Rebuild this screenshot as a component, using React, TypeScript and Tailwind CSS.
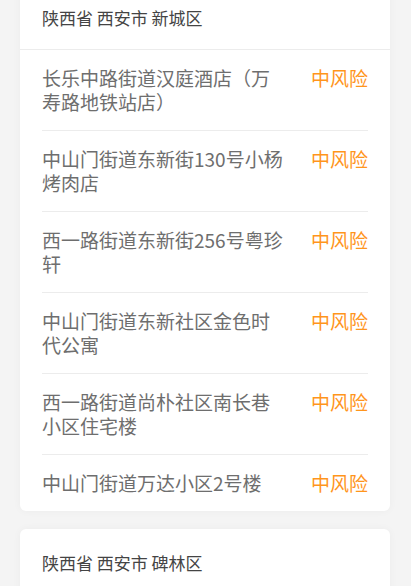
type Place = {
  name: string;
  level: string;
};

type Area = {
  title: string;
  places: Place[];
};

const areas: Area[] = [
  {
    title: "陕西省 西安市 新城区",
    places: [
      { name: "长乐中路街道汉庭酒店（万寿路地铁站店）", level: "中风险" },
      { name: "中山门街道东新街130号小杨烤肉店", level: "中风险" },
      { name: "西一路街道东新街256号粤珍轩", level: "中风险" },
      { name: "中山门街道东新社区金色时代公寓", level: "中风险" },
      { name: "西一路街道尚朴社区南长巷小区住宅楼", level: "中风险" },
      { name: "中山门街道万达小区2号楼", level: "中风险" },
    ],
  },
  {
    title: "陕西省 西安市 碑林区",
    places: [
      { name: "张家村街道西北工业大学家属区", level: "中风险" },
      { name: "太乙路街道交大一村", level: "中风险" },
    ],
  },
];

function AreaCard({ title, places }: Area) {
  return (
    <div className="bg-white rounded-md shadow-[0_0_8px_rgba(0,0,0,0.04)]">
      <div className="px-[22px] pt-[22px] pb-[19px] border-b border-[#ececec] text-[17px] leading-6 text-[#444]">
        {title}
      </div>
      <div className="pl-[22px] pr-[22px]">
        {places.map((p, i) => (
          <div
            key={i}
            className={
              "flex justify-between items-start py-4 " +
              (i < places.length - 1 ? "border-b border-[#ececec]" : "")
            }
          >
            <div className="max-w-[243px] text-[19px] leading-6 text-[#6e6e6e]">
              {p.name}
            </div>
            <div className="text-[19px] leading-6 text-[#ff951c] shrink-0">
              {p.level}
            </div>
          </div>
        ))}
      </div>
    </div>
  );
}

export default function App() {
  return (
    <div
      className="min-h-screen bg-[#f4f4f4] overflow-hidden"
      style={{ fontFamily: '"Noto Sans CJK SC", "Noto Sans", sans-serif' }}
    >
      <div className="-mt-4 pl-5 pr-[21px] flex flex-col gap-[18px] pb-6">
        {areas.map((a, i) => (
          <AreaCard key={i} {...a} />
        ))}
      </div>
    </div>
  );
}
